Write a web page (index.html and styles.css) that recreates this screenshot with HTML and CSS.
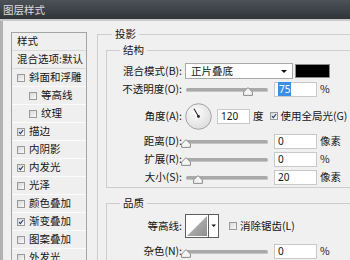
FILE: index.html
```html
<!DOCTYPE html>
<html lang="zh-CN">
<head>
  <meta charset="UTF-8" />
  <meta name="viewport" content="width=device-width, initial-scale=1.0" />
  <title>图层样式</title>
  <link rel="stylesheet" href="styles.css">
</head>
<body>
  <div class="titlebar">图层样式</div>
  <div class="window">
    <!-- 样式列表 -->
    <ul class="styles">
      <li class="head">样式</li>
      <li class="head">混合选项:默认</li>
      <li><span class="cb"></span>斜面和浮雕</li>
      <li class="sub"><span class="cb"></span>等高线</li>
      <li class="sub"><span class="cb"></span>纹理</li>
      <li><span class="cb on"><svg viewBox="0 0 8 8"><path d="M1.3 4.2 L3.2 6.2 L6.9 1.4" /></svg></span>描边</li>
      <li><span class="cb"></span>内阴影</li>
      <li><span class="cb on"><svg viewBox="0 0 8 8"><path d="M1.3 4.2 L3.2 6.2 L6.9 1.4" /></svg></span>内发光</li>
      <li><span class="cb"></span>光泽</li>
      <li><span class="cb"></span>颜色叠加</li>
      <li><span class="cb on"><svg viewBox="0 0 8 8"><path d="M1.3 4.2 L3.2 6.2 L6.9 1.4" /></svg></span>渐变叠加</li>
      <li><span class="cb"></span>图案叠加</li>
      <li><span class="cb"></span>外发光</li>
    </ul>

    <div class="main">
      <fieldset class="group">
        <legend>投影</legend>

        <!-- 结构 -->
        <fieldset class="box">
          <legend>结构</legend>
          <div class="row">
            <span class="lbl">混合模式(B):</span>
            <div class="select">正片叠底<span class="arrow"></span></div>
            <span class="swatch"></span>
          </div>
          <div class="row">
            <span class="lbl">不透明度(O):</span>
            <div class="slider"><svg class="thumb" style="left:75%" viewBox="0 0 10 9"><path d="M5 0.6 L9.4 5 L9.4 8.4 L0.6 8.4 L0.6 5 Z" /></svg></div>
            <span class="num"><span class="sel">75</span></span>
            <span class="unit">%</span>
          </div>
          <div class="row angle">
            <span class="lbl">角度(A):</span>
            <svg class="dial" viewBox="0 0 27 27">
              <defs>
                <radialGradient id="dialbg" cx="40%" cy="35%" r="70%">
                  <stop offset="0" stop-color="#fdfdfd" />
                  <stop offset="1" stop-color="#dcdcdc" />
                </radialGradient>
              </defs>
              <circle cx="13.5" cy="13.5" r="12.8" fill="url(#dialbg)" stroke="#a3a3a3" />
              <line x1="13.5" y1="13.5" x2="9" y2="5.7" stroke="#2b2b2b" stroke-width="1.1" />
              <circle cx="13.5" cy="13.5" r="1.4" fill="#2b2b2b" />
            </svg>
            <span class="num short">120</span>
            <span class="unit">度</span>
            <span class="cb on gl"><svg viewBox="0 0 8 8"><path d="M1.3 4.2 L3.2 6.2 L6.9 1.4" /></svg></span>
            <span class="cblbl">使用全局光(G)</span>
          </div>
          <div class="row">
            <span class="lbl">距离(D):</span>
            <div class="slider"><svg class="thumb" style="left:0%" viewBox="0 0 10 9"><path d="M5 0.6 L9.4 5 L9.4 8.4 L0.6 8.4 L0.6 5 Z" /></svg></div>
            <span class="num">0</span>
            <span class="unit">像素</span>
          </div>
          <div class="row">
            <span class="lbl">扩展(R):</span>
            <div class="slider"><svg class="thumb" style="left:0%" viewBox="0 0 10 9"><path d="M5 0.6 L9.4 5 L9.4 8.4 L0.6 8.4 L0.6 5 Z" /></svg></div>
            <span class="num">0</span>
            <span class="unit">%</span>
          </div>
          <div class="row">
            <span class="lbl">大小(S):</span>
            <div class="slider"><svg class="thumb" style="left:15%" viewBox="0 0 10 9"><path d="M5 0.6 L9.4 5 L9.4 8.4 L0.6 8.4 L0.6 5 Z" /></svg></div>
            <span class="num">20</span>
            <span class="unit">像素</span>
          </div>
        </fieldset>

        <!-- 品质 -->
        <fieldset class="box quality">
          <legend>品质</legend>
          <div class="row contour-row">
            <span class="lbl">等高线:</span>
            <svg class="contour" viewBox="0 0 34 24">
              <defs>
                <linearGradient id="tri" x1="0" y1="0" x2="1" y2="1">
                  <stop offset="0" stop-color="#c4c4c4" />
                  <stop offset="1" stop-color="#8d8d8d" />
                </linearGradient>
              </defs>
              <rect x="0.5" y="0.5" width="33" height="23" fill="#fff" stroke="#5e5e5e" />
              <polygon points="2,22 22,2 22,22" fill="url(#tri)" />
              <line x1="23.5" y1="1" x2="23.5" y2="23" stroke="#5e5e5e" />
              <polygon points="26.5,10.5 31,10.5 28.75,13" fill="#111" />
            </svg>
            <span class="cb aa"></span>
            <span class="cblbl">消除锯齿(L)</span>
          </div>
          <div class="row noise">
            <span class="lbl">杂色(N):</span>
            <div class="slider"><svg class="thumb" style="left:0%" viewBox="0 0 10 9"><path d="M5 0.6 L9.4 5 L9.4 8.4 L0.6 8.4 L0.6 5 Z" /></svg></div>
            <span class="num">0</span>
            <span class="unit">%</span>
          </div>
        </fieldset>
      </fieldset>
    </div>
  </div>
</body>
</html>
```

FILE: styles.css
```css
* {
  margin: 0;
  padding: 0;
  box-sizing: border-box;
}
html, body {
  width: 350px;
  height: 260px;
  overflow: hidden;
}
body {
  background: #f0f0f0;
  font-family: "Noto Sans CJK SC", "Noto Sans", sans-serif;
  font-size: 10.5px;
  line-height: 1;
  color: #141414;
}
.titlebar {
  height: 21px;
  padding-left: 3px;
  line-height: 19px;
  color: #dedede;
  background: linear-gradient(#4c5257, #2f3439);
  border-bottom: 2px solid #c8c8c8;
}
.window {
  display: flex;
  align-items: flex-start;
  width: 430px;
  height: 239px;
  border-left: 3px solid #b2b2b2;
  padding-left: 8px;
}

/* 样式列表 */
.styles {
  list-style: none;
  width: 76px;
  margin-top: 11px;
  border: 1px solid #a4a4a4;
  background: #efefef;
}
.styles li {
  display: flex;
  align-items: center;
  height: 18px;
  padding-left: 5px;
  border-bottom: 1px solid #fbfbfb;
  white-space: nowrap;
}
.styles .head {
  border-bottom-color: #dadada;
}
.styles .sub {
  padding-left: 17px;
}
.cb {
  display: inline-flex;
  flex: none;
  width: 8px;
  height: 8px;
  margin-right: 4px;
  border: 1px solid #9a9a9a;
  background: linear-gradient(135deg, #d6d6d6, #fbfbfb);
}
.cb svg {
  width: 100%;
  height: 100%;
  overflow: visible;
}
.cb path {
  fill: none;
  stroke: #1e3a6e;
  stroke-width: 1.4;
}

/* 右侧设置 */
.main {
  margin-left: 10px;
  margin-top: 6px;
}
fieldset {
  border: 1px solid #cecece;
}
legend {
  padding: 0 3px;
  line-height: 14px;
}
.group {
  width: 300px;
  padding: 2px 0 0 8px;
}
.group > legend {
  margin-left: 6px;
}
.box {
  padding: 5px 0 1px 0;
}
.box > legend {
  margin-left: 13px;
}
.quality {
  margin-top: 8px;
  padding-top: 4px;
}
.row {
  display: flex;
  align-items: center;
  height: 18px;
  white-space: nowrap;
}
.row.angle {
  height: 28px;
  margin: 4px 0 2px;
}
.row.contour-row {
  height: 24px;
}
.row.noise {
  margin-top: 4px;
}
.lbl {
  width: 75px;
  text-align: right;
}
.select {
  position: relative;
  width: 108px;
  height: 16px;
  margin-left: 3px;
  padding-left: 5px;
  line-height: 14px;
  background: #fff;
  border: 1px solid #a9a9a9;
}
.arrow {
  position: absolute;
  right: 5px;
  top: 6px;
  border-left: 3px solid transparent;
  border-right: 3px solid transparent;
  border-top: 3px solid #111;
}
.swatch {
  width: 35px;
  height: 14px;
  margin-left: 2px;
  background: #000;
  border: 1px solid #8c8c8c;
}
.slider {
  position: relative;
  width: 82px;
  height: 9px;
  margin: 5px 0 0 4px;
}
.slider::before {
  content: "";
  position: absolute;
  left: 0;
  right: 0;
  top: 1px;
  height: 3px;
  border-radius: 2px;
  background: #a9a9a9;
  border-bottom: 1px solid #c4c4c4;
}
.thumb {
  position: absolute;
  top: 0;
  width: 10px;
  height: 9px;
  transform: translateX(-50%);
}
.thumb path {
  fill: #f4f4f4;
  stroke: #8a8a8a;
  stroke-width: 1;
}
.num {
  width: 43px;
  height: 15px;
  margin-left: 6px;
  padding-left: 3px;
  font-family: "Noto Sans", sans-serif;
  font-size: 10px;
  line-height: 13px;
  background: #fff;
  border: 1px solid #c9c9c9;
}
.num.short {
  width: 33px;
  margin-left: 5px;
}
.sel {
  padding: 0 1px;
  color: #fff;
  background: #3b8ee6;
}
.unit {
  margin-left: 3px;
}
.dial {
  width: 27px;
  height: 27px;
  margin-left: 3px;
}
.cb.gl {
  margin-left: 6px;
  margin-right: 3px;
}
.contour {
  width: 34px;
  height: 24px;
  margin-left: 3px;
}
.cb.aa {
  margin-left: 10px;
  margin-right: 3px;
}
```
